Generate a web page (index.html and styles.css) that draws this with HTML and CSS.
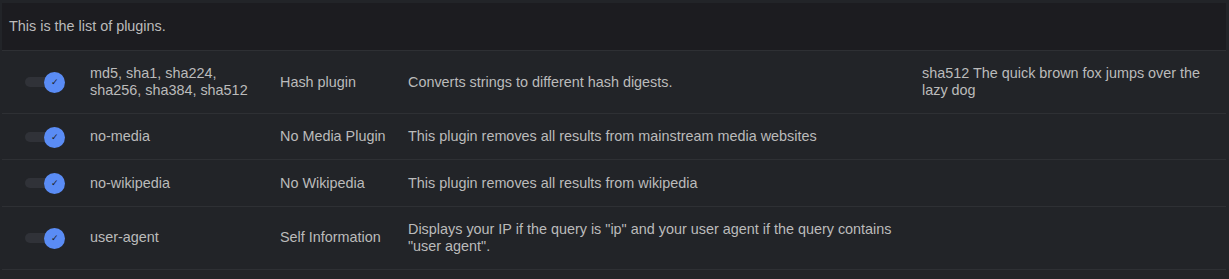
FILE: index.html
```html
<!DOCTYPE html>
<html lang="en">
<head>
    <meta charset="UTF-8">
    <meta name="viewport" content="width=device-width, initial-scale=1.0">
    <title>Plugins</title>
    <link rel="stylesheet" href="styles.css">
</head>
<body>
    <div class="plugins">
        <table class="plugin-table">
            <caption>This is the list of plugins.</caption>
            <colgroup>
                <col class="col-toggle">
                <col class="col-name">
                <col class="col-title">
                <col class="col-desc">
                <col class="col-example">
            </colgroup>
            <tbody>
                <tr>
                    <td><label class="toggle"><input type="checkbox" checked><span class="knob">&#10003;</span></label></td>
                    <td>md5, sha1, sha224, sha256, sha384, sha512</td>
                    <td>Hash plugin</td>
                    <td>Converts strings to different hash digests.</td>
                    <td>sha512 The quick brown fox jumps over the lazy dog</td>
                </tr>
                <tr>
                    <td><label class="toggle"><input type="checkbox" checked><span class="knob">&#10003;</span></label></td>
                    <td>no-media</td>
                    <td>No Media Plugin</td>
                    <td>This plugin removes all results from mainstream media websites</td>
                    <td></td>
                </tr>
                <tr>
                    <td><label class="toggle"><input type="checkbox" checked><span class="knob">&#10003;</span></label></td>
                    <td>no-wikipedia</td>
                    <td>No Wikipedia</td>
                    <td>This plugin removes all results from wikipedia</td>
                    <td></td>
                </tr>
                <tr>
                    <td><label class="toggle"><input type="checkbox" checked><span class="knob">&#10003;</span></label></td>
                    <td>user-agent</td>
                    <td>Self Information</td>
                    <td>Displays your IP if the query is "ip" and your user agent if the query contains "user agent".</td>
                    <td></td>
                </tr>
            </tbody>
        </table>
    </div>
</body>
</html>
```

FILE: styles.css
```css
body {
    margin: 0;
    background-color: #222428;
    font-family: "Liberation Sans", Arial, sans-serif;
    font-size: 14.4px;
    line-height: 16.6px;
    color: #bbbbbb;
}

.plugins {
    padding: 3px 3px 0 2px;
}

.plugin-table {
    width: 100%;
    table-layout: fixed;
    border-collapse: collapse;
    border-top: 1px solid #2e3034;
}

.plugin-table caption {
    text-align: left;
    background-color: #1c1c20;
    padding: 15px 7px 15.4px;
}

.col-toggle { width: 80px; }
.col-name { width: 190px; }
.col-title { width: 128px; }
.col-desc { width: 514px; }

.plugin-table td {
    padding: 1em 8px;
    vertical-align: middle;
    border-top: 1px solid #2e3034;
    border-bottom: 1px solid #2e3034;
}

.toggle {
    position: relative;
    display: block;
    width: 40px;
    height: 16px;
    margin-left: 15px;
}

.toggle input {
    display: none;
}

.toggle::before {
    content: "";
    position: absolute;
    left: 0;
    top: 3px;
    width: 34px;
    height: 10px;
    border-radius: 5px;
    background-color: #303238;
}

.knob {
    position: absolute;
    left: 19px;
    top: -2px;
    width: 21px;
    height: 21px;
    border-radius: 50%;
    background-color: #5a8cf5;
    color: #1a1a1f;
    font-size: 9px;
    line-height: 21px;
    text-align: center;
}
```
